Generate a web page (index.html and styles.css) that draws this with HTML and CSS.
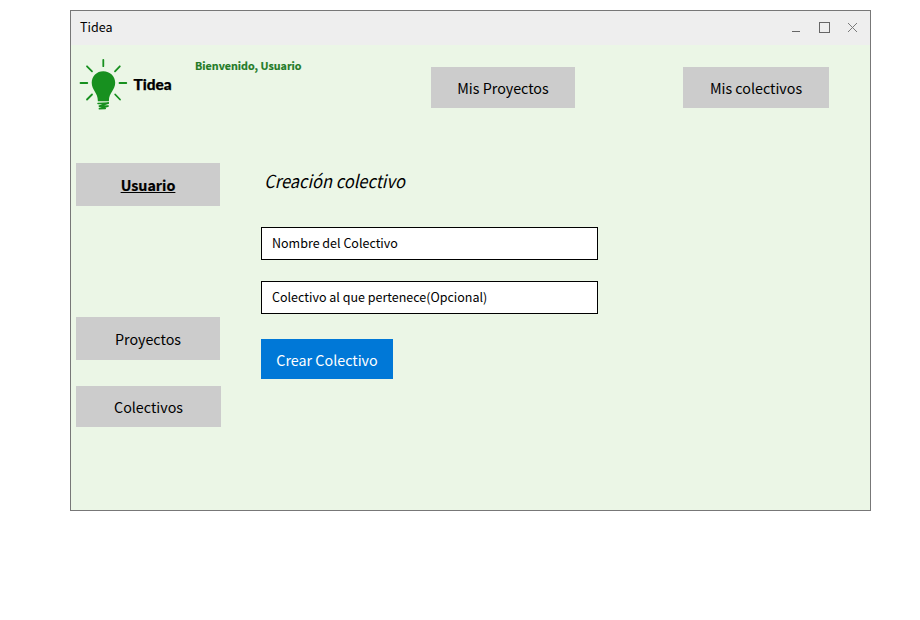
FILE: index.html
```html
<!DOCTYPE html>
<html lang="es">
<head>
<meta charset="utf-8">
<title>Tidea</title>
<link rel="stylesheet" href="styles.css">
</head>
<body>
<div class="window">
  <div class="titlebar">
    <span class="title">Tidea</span>
    <svg class="controls" width="70" height="16" viewBox="0 0 70 16" fill="none" stroke="#666" shape-rendering="crispEdges">
      <path d="M3 11.5h8"/>
      <rect x="30.500" y="2.500" width="10" height="10"/>
      <path d="M59 3l9 9M68 3l-9 9" stroke-width="1" stroke="#7a7a7a" shape-rendering="auto"/>
    </svg>
  </div>
  <header class="header">
    <div class="logo">
      <svg width="50" height="54" viewBox="0 0 50 54" fill="none" stroke="#17901f" stroke-width="1.8" stroke-linecap="round">
        <path d="M24.3 1.800v6.400M8 8.300l5 5M40.800 8.300l-4.800 5M1.500 25h6.800M40.500 25h6.800M8 41.500l5-5M41 41.500l-4.800-5"/>
        <path fill="#17901f" stroke="none" d="M24.3 13.200c-6.500 0-11.600 4.900-11.600 11.600 0 7.500 6.200 9.500 6.200 18.400h11c0-8.900 6.300-10.900 6.300-18.400 0-6.500-5.300-11.600-11.900-11.600z"/>
        <path stroke-width="1.500" d="M19 45.500l10.800-.5-10 3.300 9.800-.3-9.800 2.700 6.500-.2"/>
      </svg>
      <span class="brand">Tidea</span>
    </div>
    <div class="welcome">Bienvenido, Usuario</div>
    <nav class="topnav">
      <button class="btn projects">Mis Proyectos</button>
      <button class="btn groups">Mis colectivos</button>
    </nav>
  </header>
  <div class="body">
    <aside class="sidebar">
      <button class="btn user">Usuario</button>
      <button class="btn side-projects">Proyectos</button>
      <button class="btn side-groups">Colectivos</button>
    </aside>
    <main class="form">
      <h1>Creación colectivo</h1>
      <div class="field">Nombre del Colectivo</div>
      <div class="field">Colectivo al que pertenece(Opcional)</div>
      <button class="btn submit">Crear Colectivo</button>
    </main>
  </div>
</div>
</body>
</html>
```
FILE: styles.css
```css
* { box-sizing: border-box; }
body {
  margin: 0;
  padding: 10px 0 0 70px;
  background: #fff;
  color: #000;
  font: 12.5px/20px "Noto Sans CJK JP", sans-serif;
}
.window {
  width: 801px;
  height: 501px;
  border: 1px solid #777;
  background: #ebf6e6;
}
.titlebar {
  height: 34px;
  padding: 0 9px;
  background: #eee;
  display: flex;
  align-items: center;
  justify-content: space-between;
}
.title { padding-bottom: 2px; }
.controls { margin-right: 2px; }
.header {
  height: 118px;
  display: flex;
  align-items: flex-start;
}
.logo {
  width: 116px;
  margin: 13px 0 0 8px;
  display: flex;
  align-items: center;
}
.brand {
  margin-left: 4.5px;
  padding-bottom: 2px;
  font: 900 15.4px/20px Lato, sans-serif;
  -webkit-text-stroke: 0.25px #000;
}
.welcome {
  width: 236px;
  margin-top: 11px;
  color: #237a26;
  font-size: 10.72px;
  font-weight: 700;
  -webkit-text-stroke: 0.2px #237a26;
}
.topnav {
  margin-top: 22px;
  display: flex;
  gap: 108px;
}
.btn {
  border: 0;
  padding: 0;
  background: #ccc;
  color: #000;
  font: 14.3px/24px "Noto Sans CJK JP", sans-serif;
  white-space: nowrap;
}
.projects { width: 144px; height: 41px; }
.groups { width: 146px; height: 41px; }
.body { display: flex; }
.sidebar {
  width: 190px;
  padding-left: 5px;
  display: flex;
  flex-direction: column;
  align-items: flex-start;
}
.user {
  width: 144px;
  height: 43px;
  font-weight: 700;
  text-decoration: underline;
  -webkit-text-stroke: 0.2px #000;
}
.side-projects { width: 144px; height: 43px; margin-top: 111px; }
.side-groups { width: 145px; height: 41px; margin-top: 26px; }
.form { width: 337px; }
h1 {
  height: 64px;
  margin: 0;
  padding: 3px 0 0 3.5px;
  font-size: 17.9px;
  line-height: 28px;
  font-weight: 400;
  font-style: italic;
  transform: scaleX(0.92);
  transform-origin: left;
}
.field {
  height: 33px;
  margin-bottom: 21px;
  padding: 0 10px;
  border: 1px solid #000;
  background: #fff;
  line-height: 29px;
}
.submit {
  width: 132px;
  height: 40px;
  margin-top: 4px;
  padding-top: 1px;
  background: #0078d7;
  color: #fff;
}
```
